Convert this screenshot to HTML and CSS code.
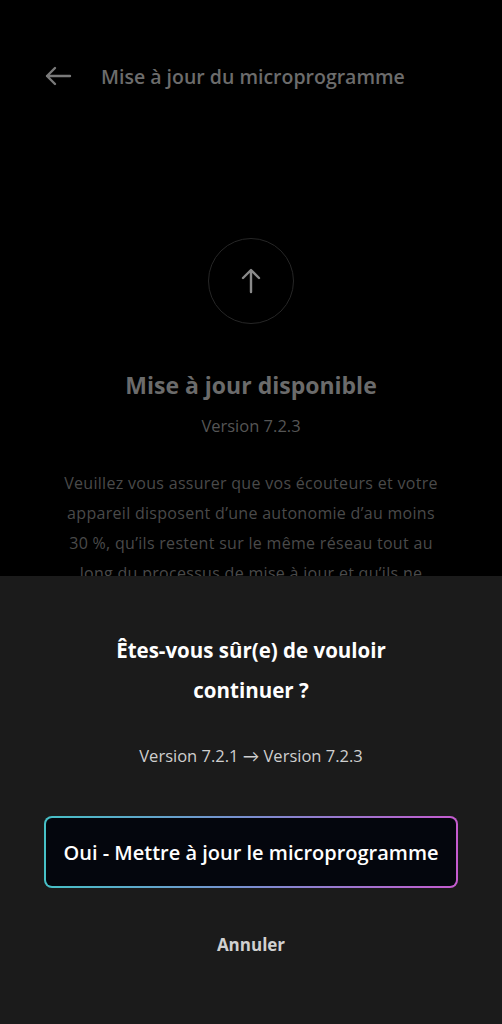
FILE: index.html
```html
<!DOCTYPE html>
<html lang="fr">
<head>
    <meta charset="UTF-8">
    <meta name="viewport" content="width=device-width, initial-scale=1.0">
    <title>Mise à jour du microprogramme</title>
    <link rel="stylesheet" href="styles.css">
</head>
<body>
    <div class="screen">
        <header class="top-bar">
            <svg class="back-icon" width="28" height="20" viewBox="0 0 28 20">
                <path d="M26 10H3M11 2L3 10l8 8" fill="none" stroke="currentColor" stroke-width="2.4" stroke-linecap="round" stroke-linejoin="round"/>
            </svg>
            <span class="top-title">Mise à jour du microprogramme</span>
        </header>

        <div class="update-info">
            <div class="update-circle">
                <svg width="22" height="26" viewBox="0 0 22 26">
                    <path d="M11 24V3M3 10l8-8 8 8" fill="none" stroke="currentColor" stroke-width="2.4" stroke-linecap="round" stroke-linejoin="round"/>
                </svg>
            </div>
            <h2 class="update-title">Mise à jour disponible</h2>
            <p class="update-version">Version 7.2.3</p>
            <p class="update-text">Veuillez vous assurer que vos écouteurs et votre appareil disposent d’une autonomie d’au moins 30 %, qu’ils restent sur le même réseau tout au long du processus de mise à jour et qu’ils ne soient pas utilisés pendant la mise à jour.</p>
        </div>

        <!-- feuille de confirmation -->
        <div class="sheet">
            <h3 class="sheet-title">Êtes-vous sûr(e) de vouloir continuer ?</h3>
            <p class="sheet-version">Version 7.2.1 → Version 7.2.3</p>
            <button type="button" class="confirm-btn">Oui - Mettre à jour le microprogramme</button>
            <button type="button" class="cancel-btn">Annuler</button>
        </div>
    </div>
</body>
</html>
```

FILE: styles.css
```css
html, body {
    margin: 0;
    padding: 0;
    background-color: #000;
}
body {
    font-family: "Open Sans", Lato, sans-serif;
}
.screen {
    position: relative;
    width: 502px;
    height: 1024px;
    overflow: hidden;
    background-color: #000;
}
.top-bar {
    display: flex;
    align-items: center;
    height: 40px;
    padding: 56px 0 0 44px;
    color: #6c6c6c;
}
.back-icon {
    color: #7a7a7a;
}
.top-title {
    margin-left: 29px;
    font-size: 19.5px;
    font-weight: 600;
}
.update-info {
    display: flex;
    flex-direction: column;
    align-items: center;
    padding-top: 142px;
}
.update-circle {
    width: 84px;
    height: 84px;
    border: 1.5px solid #262626;
    border-radius: 50%;
    display: flex;
    align-items: center;
    justify-content: center;
    color: #8a8a8a;
}
.update-title {
    margin: 46px 0 0 0;
    font-size: 23px;
    line-height: 30px;
    font-weight: 700;
    color: #6b6b6b;
}
.update-version {
    margin: 16px 0 0 0;
    font-size: 16.5px;
    line-height: 20px;
    color: #555;
}
.update-text {
    width: 386px;
    margin: 32px 0 0 0;
    font-size: 16px;
    letter-spacing: 0.3px;
    line-height: 30px;
    text-align: center;
    color: #4a4a4a;
}
.sheet {
    position: absolute;
    left: 0;
    right: 0;
    top: 576px;
    bottom: 0;
    background-color: #1b1b1b;
    display: flex;
    flex-direction: column;
    align-items: center;
    padding-top: 54px;
}
.sheet-title {
    width: 300px;
    margin: 0;
    font-size: 20.5px;
    line-height: 40px;
    font-weight: 700;
    text-align: center;
    color: #fff;
}
.sheet-version {
    margin: 36px 0 0 0;
    font-size: 16.5px;
    line-height: 20px;
    color: #cfcfcf;
}
.confirm-btn {
    width: 414px;
    height: 72px;
    margin-top: 50px;
    border: 2px solid transparent;
    border-radius: 8px;
    background: linear-gradient(#04060d, #04060d) padding-box,
                linear-gradient(90deg, #46c0c6, #7a8ed0 50%, #c55bcf) border-box;
    color: #fff;
    font-family: inherit;
    font-size: 20px;
    font-weight: 600;
    cursor: pointer;
}
.cancel-btn {
    margin-top: 46px;
    padding: 0;
    background: none;
    border: none;
    color: #d0d0d0;
    font-family: inherit;
    font-size: 17px;
    line-height: 22px;
    font-weight: 700;
    cursor: pointer;
}
```
